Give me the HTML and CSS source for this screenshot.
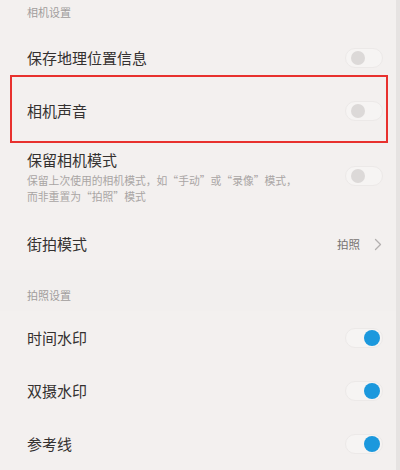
FILE: index.html
```html
<!DOCTYPE html>
<html lang="zh">
<head>
<meta charset="utf-8">
<link rel="stylesheet" href="styles.css">
</head>
<body>
<div class="screen">
  <div class="list">
    <div class="group-title first">相机设置</div>
    <div class="row">
      <span class="label">保存地理位置信息</span>
      <span class="switch"><span class="knob"></span></span>
    </div>
    <div class="row">
      <span class="label">相机声音</span>
      <span class="switch"><span class="knob"></span></span>
    </div>
    <div class="row tall">
      <div class="text">
        <div class="label">保留相机模式</div>
        <div class="desc">保留上次使用的相机模式，如“手动”或“录像”模式，<br>而非重置为“拍照”模式</div>
      </div>
      <span class="switch"><span class="knob"></span></span>
    </div>
    <div class="row nav">
      <span class="label">街拍模式</span>
      <span class="value">拍照<svg class="chev" width="8" height="13" viewBox="0 0 8 13"><path d="M1.5 1.5 L6.5 6.5 L1.5 11.5" fill="none" stroke="#b3b0af" stroke-width="1.3" stroke-linecap="round" stroke-linejoin="round"/></svg></span>
    </div>
    <div class="group-title second">拍照设置</div>
    <div class="row">
      <span class="label">时间水印</span>
      <span class="switch on"><span class="knob"></span></span>
    </div>
    <div class="row">
      <span class="label">双摄水印</span>
      <span class="switch on"><span class="knob"></span></span>
    </div>
    <div class="row">
      <span class="label">参考线</span>
      <span class="switch on"><span class="knob"></span></span>
    </div>
  </div>
  <div class="highlight"></div>
  <div class="edge"></div>
</div>
</body>
</html>
```
FILE: styles.css
```css
html, body {
  margin: 0;
  padding: 0;
}
body {
  width: 400px;
  height: 470px;
  overflow: hidden;
  background: #f2efee;
  font-family: "Noto Sans CJK SC", "Noto Sans", sans-serif;
}
.screen {
  position: relative;
  width: 400px;
  height: 470px;
  overflow: hidden;
  background: #f3f0ef;
}
.list {
  display: flex;
  flex-direction: column;
}
.group-title {
  padding-left: 27px;
  font-size: 11px;
  line-height: 16px;
  color: #a19d9c;
  box-sizing: border-box;
}
.group-title.first {
  height: 31px;
  padding-top: 4px;
}
.group-title.second {
  height: 41px;
  padding-top: 17px;
  background: #f2efee;
}
.row {
  display: flex;
  align-items: center;
  justify-content: space-between;
  height: 53px;
  padding: 0 17px 0 27px;
  box-sizing: border-box;
}
.row.tall {
  height: 81px;
  align-items: flex-start;
  padding-top: 12px;
}
.row.tall .switch {
  margin-top: 17px;
}
.row.nav {
  height: 52px;
}
.label {
  font-size: 15px;
  line-height: 22px;
  color: #343130;
}
.desc {
  font-size: 10.8px;
  line-height: 16px;
  color: #a9a5a4;
  margin-top: 1px;
}
.value {
  display: flex;
  align-items: center;
  gap: 14px;
  font-size: 11.5px;
  color: #777372;
  margin-right: 1px;
}
.switch {
  position: relative;
  width: 38px;
  height: 20px;
  border-radius: 10px;
  background: #f6f4f3;
  border: 1px solid #ece9e8;
  box-sizing: border-box;
  display: flex;
  align-items: center;
  padding: 0 2px 0 5px;
}
.switch .knob {
  width: 14px;
  height: 14px;
  border-radius: 50%;
  background: #dcd9d8;
}
.switch.on {
  justify-content: flex-end;
  padding: 0 2px 0 4px;
}
.switch.on .knob {
  width: 16px;
  height: 16px;
  background: #1b98dd;
}
.highlight {
  position: absolute;
  left: 10px;
  top: 75px;
  width: 378px;
  height: 68px;
  border: 2px solid #e8312e;
  box-sizing: border-box;
}
.edge {
  position: absolute;
  right: 0;
  top: 0;
  width: 4px;
  height: 470px;
  background: #e6e3e2;
}
```
